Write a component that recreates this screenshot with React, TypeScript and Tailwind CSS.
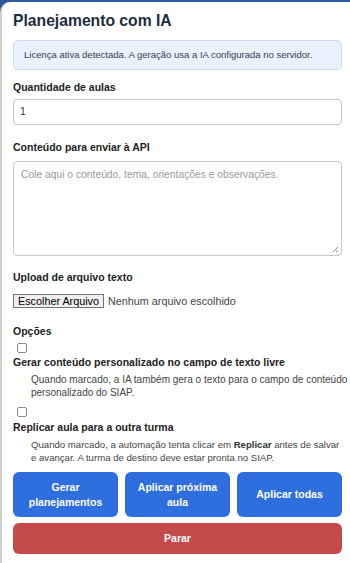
export default function App() {
  return (
    <div className="h-[563px] w-[350px] overflow-hidden bg-[#2d5a9b] pt-[2px] font-['Liberation_Sans',Arial,sans-serif] text-[#222]">
      <div className="flex h-full flex-col rounded-tl-[10px] border-l-[2px] border-[#cfcfcf] bg-white pl-[11px] pr-[8px] pt-[9px]">
        <h1 className="text-[15.7px] font-bold leading-[20px] text-[#1e2d40]">
          Planejamento com IA
        </h1>

        <div className="mt-[9px] rounded-[5px] border border-[#c9dcf5] bg-[#eaf2fd] px-[10px] py-[8px] text-[9.5px] leading-[12px] text-[#334155]">
          Licença ativa detectada. A geração usa a IA configurada no servidor.
        </div>

        <label className="mt-[10px] text-[10.5px] font-bold leading-[14px]">
          Quantidade de aulas
        </label>
        <div className="mt-[5px] flex h-[26px] items-center rounded-[4px] border border-[#c8c8c8] px-[6px] text-[10.5px] text-[#333]">
          1
        </div>

        <label className="mt-[15px] text-[10.5px] font-bold leading-[14px]">
          Conteúdo para enviar à API
        </label>
        <div className="relative mt-[7px] h-[95px] rounded-[4px] border border-[#c8c8c8] px-[7px] pt-[5px] text-[10.3px] text-[#9a9a9a]">
          Cole aqui o conteúdo, tema, orientações e observações.
          <svg
            className="absolute bottom-[2px] right-[2px]"
            width="7"
            height="7"
            viewBox="0 0 7 7"
          >
            <path d="M6 1L1 6M6 4L4 6" stroke="#888" strokeWidth="1" />
          </svg>
        </div>

        <label className="mt-[14px] text-[10.5px] font-bold leading-[14px]">
          Upload de arquivo texto
        </label>
        <div className="mt-[9px] flex items-center gap-[4px] text-[10.8px]">
          <span className="border border-[#767676] bg-[#efefef] px-[4px] leading-[12px] text-black">
            Escolher Arquivo
          </span>
          <span className="text-[#444]">Nenhum arquivo escolhido</span>
        </div>

        <label className="mt-[15px] text-[10.5px] font-bold leading-[14px]">
          Opções
        </label>
        <div className="ml-[4px] mt-[5px] h-[10px] w-[10px] rounded-[2px] border border-[#8a8a8a]" />
        <div className="mt-[2px] text-[10.5px] font-bold leading-[14px]">
          Gerar conteúdo personalizado no campo de texto livre
        </div>
        <p className="mt-[4px] whitespace-nowrap pl-[18px] text-[10px] leading-[13px] text-[#444]">
          Quando marcado, a IA também gera o texto para o campo de conteúdo
          <br />
          personalizado do SIAP.
        </p>
        <div className="ml-[4px] mt-[8px] h-[10px] w-[10px] rounded-[2px] border border-[#8a8a8a]" />
        <div className="mt-[3px] text-[10.5px] font-bold leading-[14px]">
          Replicar aula para a outra turma
        </div>
        <p className="mt-[4px] whitespace-nowrap pl-[18px] text-[9.6px] leading-[13px] text-[#444]">
          Quando marcado, a automação tenta clicar em{" "}
          <span className="font-bold text-[#333]">Replicar</span> antes de salvar
          <br />
          e avançar. A turma de destino deve estar pronta no SIAP.
        </p>

        <div className="mt-[8px] grid grid-cols-3 gap-[7px]">
          <button className="flex h-[45px] items-center justify-center rounded-[6px] bg-[#2f6ede] px-[4px] text-[10.5px] font-bold leading-[15px] text-white">
            Gerar
            <br />
            planejamentos
          </button>
          <button className="flex h-[45px] items-center justify-center rounded-[6px] bg-[#2f6ede] px-[4px] text-[10.5px] font-bold leading-[15px] text-white">
            Aplicar próxima
            <br />
            aula
          </button>
          <button className="flex h-[45px] items-center justify-center rounded-[6px] bg-[#2f6ede] px-[4px] text-[10.5px] font-bold leading-[15px] text-white">
            Aplicar todas
          </button>
        </div>
        <button className="mt-[6px] h-[31px] rounded-[6px] bg-[#c54b4b] text-[10.5px] font-bold text-white">
          Parar
        </button>
      </div>
    </div>
  );
}
